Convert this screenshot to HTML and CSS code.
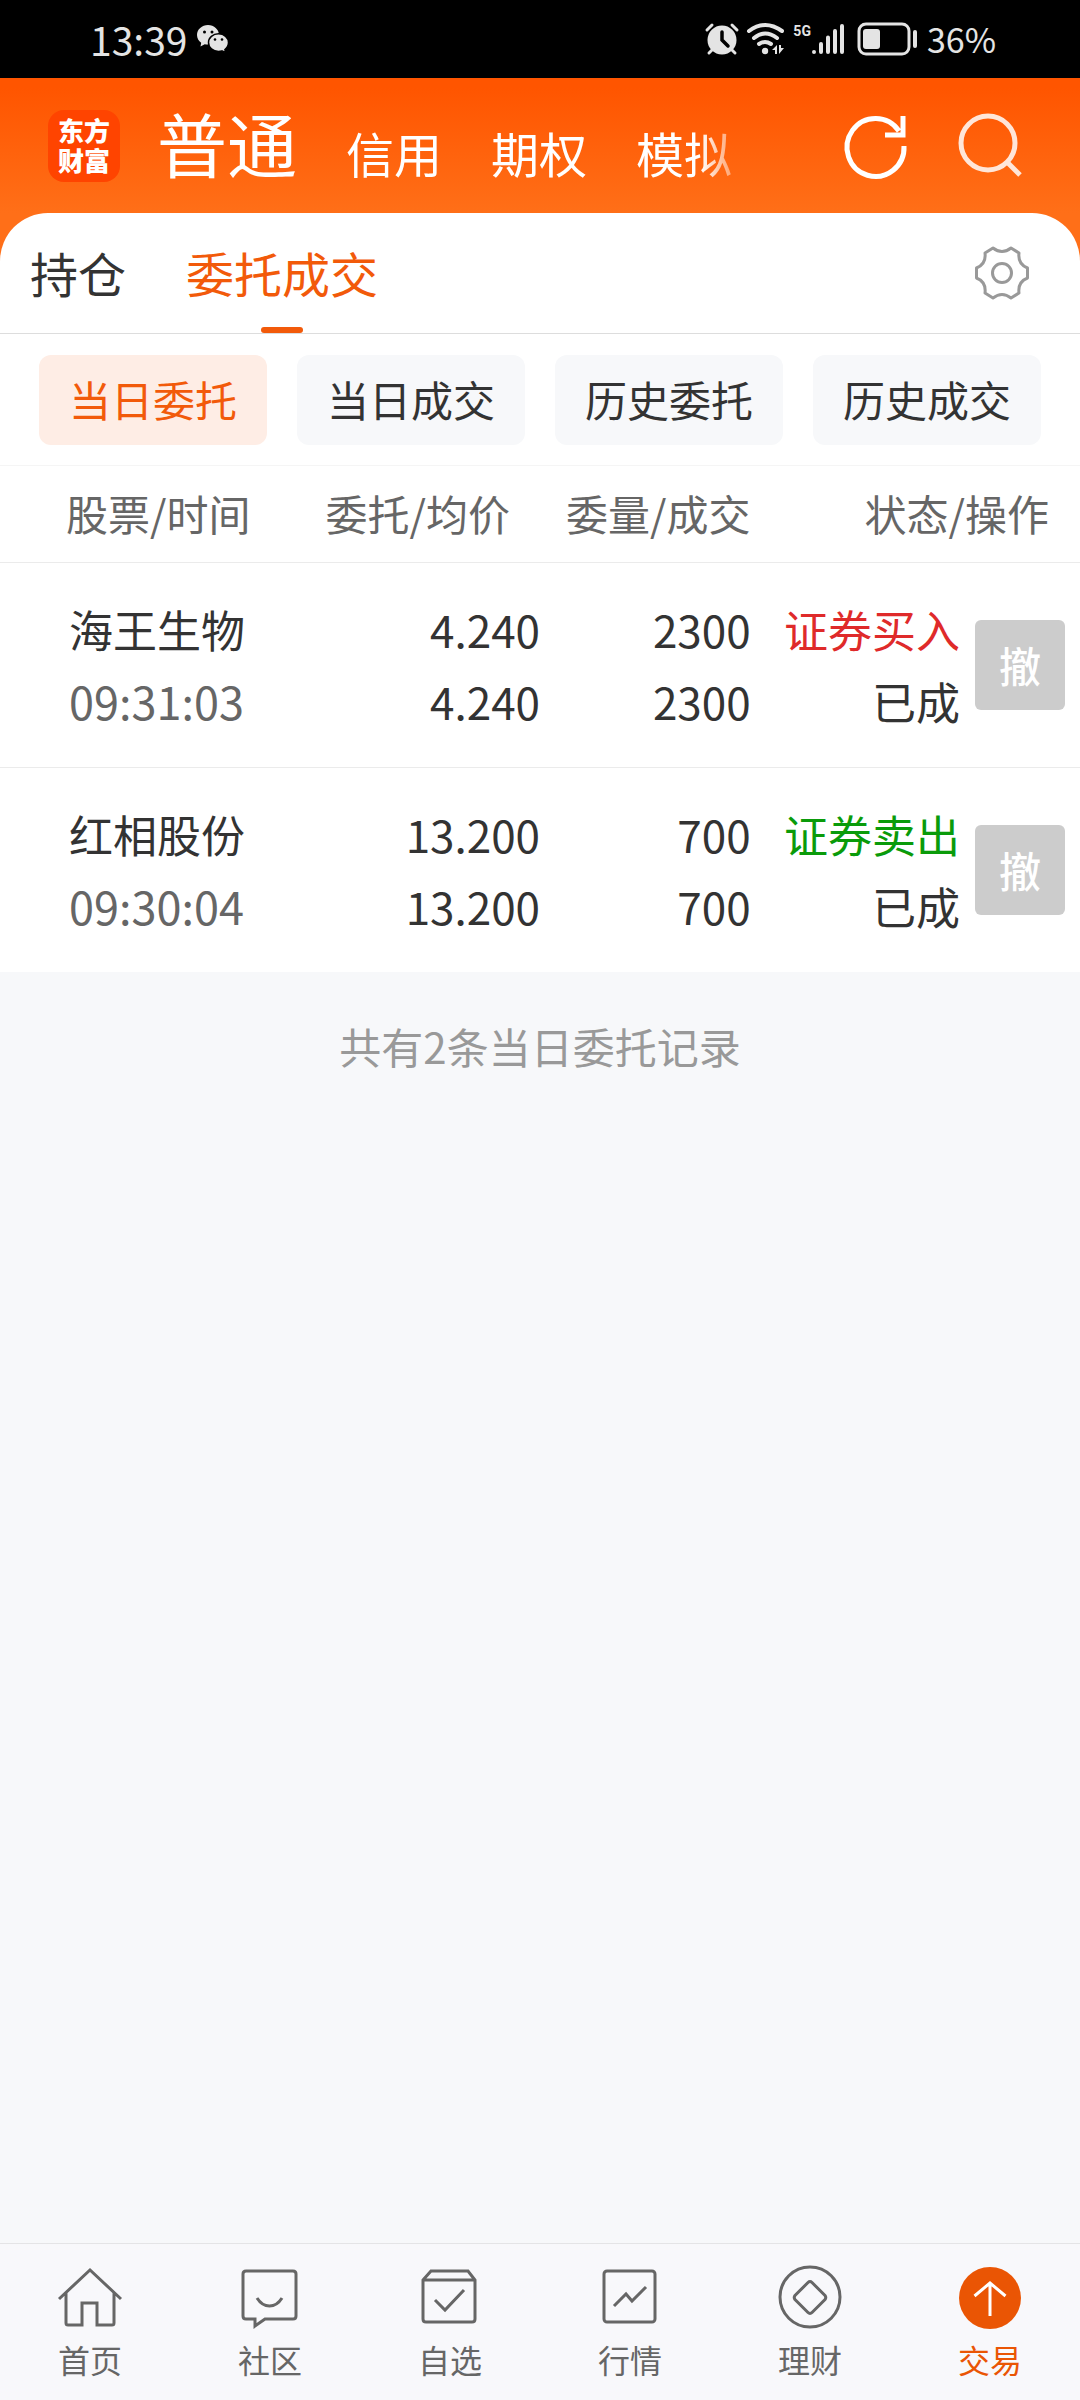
FILE: index.html
```html
<!DOCTYPE html>
<html lang="zh-CN">
<head>
<meta charset="utf-8">
<meta name="viewport" content="width=device-width, initial-scale=1">
<title>委托成交</title>
<link rel="stylesheet" href="styles.css">
</head>
<body>
<div class="status-bar">
  <span class="clock">13:39</span>
  <svg class="wechat" width="32" height="28" viewBox="0 0 32 28" aria-hidden="true">
    <path fill="#e4e4e4" d="M11 0C5 0 0 4.400 0 10c0 3.200 1.700 6 4.200 7.800L3.500 21.500l4.200-2.300c1 .3 2.200.4 3.300.4C17 19.600 22 15.500 22 10S17 0 11 0z"/>
    <path fill="#e4e4e4" stroke="#000" stroke-width="1.500" d="M21.500 8.800c-5.600 0-10 3.900-10 8.800s4.400 8.800 10 8.800c1.200 0 2.400-.2 3.400-.5l3.800 1.800-.8-3.200c2.200-1.600 3.600-4.100 3.600-6.900 0-4.900-4.400-8.800-10-8.800z"/>
    <g fill="#000"><circle cx="7.500" cy="7" r="1.500"/><circle cx="15" cy="7" r="1.500"/><circle cx="18" cy="14.500" r="1.300"/><circle cx="25" cy="14.500" r="1.300"/></g>
  </svg>
  <div class="status-icons">
    <svg width="34" height="32" viewBox="0 0 34 32" aria-hidden="true">
      <circle cx="17" cy="17" r="14.500" fill="#e4e4e4"/>
      <path d="M2 7l5-5M32 7l-5-5M4 30l4-4M30 30l-4-4" stroke="#e4e4e4" stroke-width="3" stroke-linecap="round"/>
      <path d="M17 9v8l6 6" fill="none" stroke="#000" stroke-width="3.500" stroke-linecap="round"/>
    </svg>
    <svg width="38" height="32" viewBox="0 0 38 32" aria-hidden="true">
      <g fill="none" stroke="#e4e4e4" stroke-width="4" stroke-linecap="round">
        <path d="M2 8Q18 -4 35 8"/><path d="M7 15Q18 6 30 15"/><path d="M12 21Q18 17 24 21"/>
      </g>
      <circle cx="18" cy="28" r="3.200" fill="#e4e4e4"/>
      <path fill="#e4e4e4" d="M25 27l5-5v9h-2v-4zM32 22v9l5-6h-3v-3z"/>
    </svg>
    <span class="network">5G</span>
    <svg width="34" height="32" viewBox="0 0 34 32" aria-hidden="true">
      <path d="M3 29v0M10 21v8M17 14.500v14.500M24 8v21M31 3v26" stroke="#e4e4e4" stroke-width="4" stroke-linecap="round"/>
    </svg>
    <svg class="battery" width="62" height="34" viewBox="0 0 62 34" aria-hidden="true">
      <rect x="2" y="2" width="50" height="30" rx="7" fill="none" stroke="#e4e4e4" stroke-width="3"/>
      <rect x="6" y="7" width="17" height="20" rx="3" fill="#e4e4e4"/>
      <path d="M58 10v14" stroke="#e4e4e4" stroke-width="4" stroke-linecap="round"/>
    </svg>
    <span class="percent">36%</span>
  </div>
</div>

<div class="hero">
  <header class="app-header">
    <div class="logo">东方<br>财富</div>
    <nav class="account-tabs">
      <a class="account account-active" href="#normal">普通</a>
      <a class="account" href="#credit">信用</a>
      <a class="account" href="#options">期权</a>
      <a class="account" href="#demo">模拟</a>
    </nav>
    <div class="header-actions">
      <button class="icon-button" aria-label="刷新">
        <svg width="66" height="66" viewBox="0 0 66 66"><path d="M61 33A28.500 29 0 1 1 56 18M60 3v19H42" fill="none" stroke="#fff" stroke-width="5"/></svg>
      </button>
      <button class="icon-button" aria-label="搜索">
        <svg width="66" height="66" viewBox="0 0 66 66"><path d="M50 49L63 62" stroke="#ffe6d9" stroke-width="5"/><circle cx="31" cy="30" r="27" fill="none" stroke="#ffe6d9" stroke-width="5"/></svg>
      </button>
    </div>
  </header>
  <nav class="section-tabs">
    <a class="section" href="#positions">持仓</a>
    <a class="section section-active" href="#orders">委托成交</a>
    <button class="icon-button settings" aria-label="设置">
      <svg width="56" height="56" viewBox="-28 -28 56 56"><g fill="none" stroke="#999" stroke-width="3" stroke-linejoin="round"><path d="M25.500-5V5Q15.600 9 17 20L9 25Q0 18-9 25L-17 20Q-15.600 9-25.500 5V-5Q-15.600-9-17-20L-9-25Q0-18 9-25L17-20Q15.600-9 25.500-5Z"/><circle r="9.500"/></g></svg>
    </button>
  </nav>
</div>

<main>
  <div class="filters">
    <button class="chip chip-active">当日委托</button>
    <button class="chip">当日成交</button>
    <button class="chip">历史委托</button>
    <button class="chip">历史成交</button>
  </div>
  <table class="orders">
    <colgroup><col class="col-name"><col class="col-price"><col class="col-qty"><col></colgroup>
    <thead>
      <tr><th class="name">股票/时间</th><th class="price">委托/均价</th><th>委量/成交</th><th class="state">状态/操作</th></tr>
    </thead>
    <tbody>
      <tr>
        <td class="name">海王生物<br><span class="time">09:31:03</span></td>
        <td>4.240<br>4.240</td>
        <td>2300<br>2300</td>
        <td class="state"><div class="action"><div><span class="buy">证券买入</span><br>已成</div><button class="cancel">撤</button></div></td>
      </tr>
      <tr>
        <td class="name">红相股份<br><span class="time">09:30:04</span></td>
        <td>13.200<br>13.200</td>
        <td>700<br>700</td>
        <td class="state"><div class="action"><div><span class="sell">证券卖出</span><br>已成</div><button class="cancel">撤</button></div></td>
      </tr>
    </tbody>
  </table>
  <p class="summary">共有2条当日委托记录</p>
</main>

<nav class="bottom-nav">
  <a class="nav-item" href="#home">
    <svg class="nav-icon" viewBox="0 0 64 64"><path d="M1 35L32 6 63 35M8 29V59Q8 61 10 61H24V39H39V61H54Q56 61 56 59V29"/></svg>
    首页</a>
  <a class="nav-item" href="#community">
    <svg class="nav-icon" viewBox="0 0 64 64"><path d="M8 7H55Q58 7 58 10V52Q58 55 55 55H27L17 62V55H8Q5 55 5 52V10Q5 7 8 7ZM19 34Q24 42 31.500 42T44 34"/></svg>
    社区</a>
  <a class="nav-item" href="#watchlist">
    <svg class="nav-icon" viewBox="0 0 64 64"><path d="M5 16L13 7H50L57 16V55Q57 58 54 58H8Q5 58 5 55ZM5 16H57M17 36L27 46 46 26"/></svg>
    自选</a>
  <a class="nav-item" href="#market">
    <svg class="nav-icon" viewBox="0 0 64 64"><rect x="6" y="7" width="51" height="51" rx="3"/><path d="M16 42L28 30 34 37 48 23"/></svg>
    行情</a>
  <a class="nav-item" href="#wealth">
    <svg class="nav-icon" viewBox="0 0 64 64"><circle cx="32" cy="33" r="30"/><path d="M30 18.500Q32 16.500 34 18.500L47 31.500Q48.500 33.500 47 35.500L34 48.500Q32 50.500 30 48.500L17 35.500Q15.500 33.500 17 31.500Z"/></svg>
    理财</a>
  <a class="nav-item nav-active" href="#trade">
    <svg class="nav-icon" viewBox="0 0 64 64"><circle cx="32" cy="34" r="31" fill="#ea5504" stroke="none"/><path d="M32 52V19M16.500 32L32 19 47.500 32" stroke="#fff"/></svg>
    交易</a>
</nav>
</body>
</html>
```
FILE: styles.css
```css
* { box-sizing: border-box; }

body {
  margin: 0;
  min-height: 100vh;
  display: flex;
  flex-direction: column;
  background: #f7f8fa;
  color: #333;
  font-family: "Noto Sans CJK SC", sans-serif;
  font-size: 44px;
}

a { color: inherit; text-decoration: none; }

button {
  border: 0;
  padding: 0;
  background: none;
  color: inherit;
  font: inherit;
}

svg { display: block; overflow: visible; }

/* System status bar */
.status-bar {
  height: 78px;
  padding: 0 84px 0 90px;
  display: flex;
  align-items: center;
  background: #000;
  color: #e4e4e4;
}
.clock { font-size: 39px; line-height: 72px; }
.wechat { margin-left: 10px; }
.status-icons {
  margin-left: auto;
  display: flex;
  align-items: center;
  gap: 8px;
}
.network {
  padding-bottom: 16px;
  font: bold 14px/16px "Liberation Sans Narrow", Roboto, sans-serif;
}
.status-icons .network + svg { margin-left: -8px; }
.battery { margin-left: 4px; }
.percent { font-size: 34px; line-height: 72px; }

/* Orange header with the rounded tab panel */
.hero { background: linear-gradient(#ff5500 10px, #ff6f18 135px); }
.app-header {
  height: 135px;
  padding: 0 57px 0 48px;
  display: flex;
  align-items: center;
}
.logo {
  width: 72px;
  height: 72px;
  padding-top: 5px;
  border-radius: 16px;
  background: #ff4400;
  color: #fff;
  font-size: 26px;
  font-weight: 900;
  line-height: 30px;
  text-align: center;
}
.account-tabs {
  margin-left: 37px;
  padding-top: 4px;
  display: flex;
  align-items: baseline;
  gap: 49px;
  color: #fff;
  -webkit-mask-image: linear-gradient(to left, rgba(0, 0, 0, 0.4), #000 32px);
  mask-image: linear-gradient(to left, rgba(0, 0, 0, 0.4), #000 32px);
}
.account { font-size: 48px; line-height: 96px; }
.account-active { font-size: 70px; }
.header-actions {
  margin-left: auto;
  display: flex;
  gap: 48px;
}

.section-tabs {
  height: 121px;
  padding: 0 50px 0 30px;
  border-bottom: 1px solid #ddd;
  border-radius: 48px 48px 0 0;
  display: flex;
  align-items: stretch;
  gap: 60px;
  background: #fff;
  font-size: 48px;
  line-height: 118px;
}
.section-active { position: relative; color: #f25a0a; }
.section-active::after {
  content: "";
  position: absolute;
  left: 50%;
  bottom: 0;
  width: 42px;
  height: 6px;
  margin-left: -21px;
  border-radius: 3px;
  background: #f25a0a;
}
.settings { margin-left: auto; }

/* Filter chips */
.filters {
  padding: 21px 39px 20px;
  border-bottom: 1px solid #f5f5f5;
  display: grid;
  grid-template-columns: repeat(4, 1fr);
  gap: 30px;
  background: #fff;
}
.chip {
  height: 90px;
  padding-bottom: 3px;
  border-radius: 12px;
  background: #f7f8fa;
  font-size: 42px;
}
.chip-active { background: #feede5; color: #f25a0a; }

/* Orders table */
.orders {
  width: 100%;
  border-spacing: 0;
  table-layout: fixed;
  background: #fff;
  text-align: right;
}
.col-name { width: 26%; }
.col-price { width: 24%; }
.col-qty { width: 19.5%; }
.orders th {
  height: 97px;
  padding: 0 0 2px;
  border-bottom: 1px solid #ebebeb;
  color: #666;
  font-size: 42px;
  font-weight: 400;
  line-height: 94px;
  white-space: nowrap;
}
.orders td {
  padding: 30px 0;
  line-height: 72px;
  white-space: nowrap;
}
.orders tr + tr td { border-top: 1px solid #ebebeb; }
.orders .name { padding-left: 69px; text-align: left; }
.orders th.name { padding-left: 66px; }
.orders .price { padding-right: 30px; }
.orders th.state { padding-right: 31px; }
.orders td.state { padding-right: 15px; }
.time { color: #666; font-size: 45px; }
.action {
  display: flex;
  align-items: center;
  justify-content: flex-end;
  gap: 15px;
}
.buy { color: #df2a2a; }
.sell { color: #0a9b0a; }
.cancel {
  width: 90px;
  height: 90px;
  border-radius: 6px;
  background: #ccc;
  color: #fff;
  font-size: 42px;
  font-weight: 500;
}

.summary {
  margin: 38px 0;
  color: #999;
  font-size: 42px;
  line-height: 72px;
  text-align: center;
}

/* Bottom navigation */
.bottom-nav {
  margin-top: auto;
  padding: 20px 0 21px;
  border-top: 1px solid #e4e4e6;
  display: grid;
  grid-template-columns: repeat(6, 1fr);
  background: #f8f8fb;
  color: #666;
}
.nav-item {
  display: flex;
  flex-direction: column;
  align-items: center;
  gap: 11px;
  font-size: 32px;
  line-height: 40px;
}
.nav-active { color: #ea5504; }
.nav-icon {
  width: 64px;
  height: 64px;
  fill: none;
  stroke: #666;
  stroke-width: 3;
}
```
